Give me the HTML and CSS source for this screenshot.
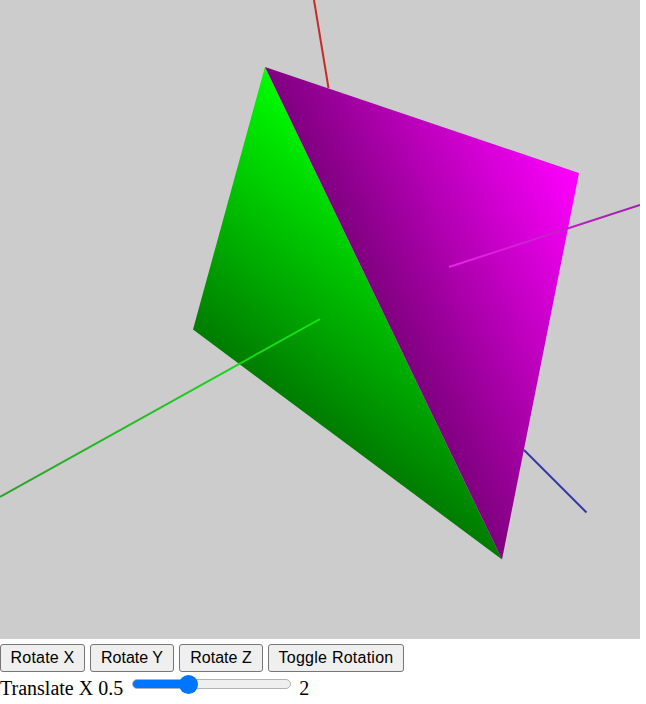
FILE: index.html
```html
<!DOCTYPE html>
<html lang="en">
<head>
<meta charset="utf-8">
<title>Rotating Tetrahedron</title>
<link rel="stylesheet" href="styles.css">
</head>
<body>
<svg class="scene" width="640" height="639" viewBox="0 0 640 639" role="img" aria-label="3D tetrahedron with axes">
  <defs>
    <linearGradient id="faceGreen" gradientUnits="userSpaceOnUse" x1="265" y1="67" x2="113.8" y2="270.1">
      <stop offset="0" stop-color="#00ff00"/>
      <stop offset="1" stop-color="#007c00"/>
    </linearGradient>
    <linearGradient id="faceMagenta" gradientUnits="userSpaceOnUse" x1="365.6" y1="275.8" x2="579" y2="173">
      <stop offset="0" stop-color="#800080"/>
      <stop offset="1" stop-color="#ff00ff"/>
    </linearGradient>
    <linearGradient id="axisGreen" gradientUnits="userSpaceOnUse" x1="320" y1="319" x2="0" y2="497">
      <stop offset="0" stop-color="#11e811"/>
      <stop offset="1" stop-color="#2ca02c"/>
    </linearGradient>
    <linearGradient id="axisMagenta" gradientUnits="userSpaceOnUse" x1="449" y1="267" x2="640" y2="205">
      <stop offset="0" stop-color="#f020f0"/>
      <stop offset="1" stop-color="#a020a8"/>
    </linearGradient>
  </defs>
  <line class="axis axis-red" x1="314" y1="0" x2="328.5" y2="88"/>
  <line class="axis axis-blue" x1="524" y1="450" x2="586.5" y2="512.5"/>
  <polygon points="265,67 193,329.5 502,559.5" fill="url(#faceGreen)"/>
  <polygon points="265,67 579,173 502,559.5" fill="url(#faceMagenta)"/>
  <line class="axis" stroke="url(#axisGreen)" x1="320" y1="319" x2="0" y2="497"/>
  <line class="axis" stroke="url(#axisMagenta)" x1="449" y1="267" x2="640" y2="205"/>
</svg>
<div class="controls">
  <button class="btn btn-x" type="button">Rotate X</button>
  <button class="btn" type="button">Rotate Y</button>
  <button class="btn" type="button">Rotate Z</button>
  <button class="btn btn-wide" type="button">Toggle Rotation</button>
</div>
<div class="slider-row">
  <label for="tx">Translate X 0.5</label>
  <input class="slider" id="tx" type="range" min="0" max="3" step="0.01" value="1">
  <span>2</span>
</div>
</body>
</html>
```
FILE: styles.css
```css
html, body {
  margin: 0;
  padding: 0;
  background: #fff;
}

body {
  font-family: "Liberation Serif", "Times New Roman", serif;
  font-size: 20px;
  color: #000;
}

.scene {
  display: block;
  background: #cccccc;
}

.axis {
  stroke-width: 2;
  fill: none;
}

.axis-red { stroke: #c82a2a; }
.axis-blue { stroke: #3636a8; }

.controls {
  display: flex;
  gap: 5px;
  margin-top: 5px;
}

.btn {
  font-family: "Liberation Sans", Arial, sans-serif;
  font-size: 16px;
  width: 84px;
  height: 28px;
  padding: 1px 0;
  color: #000;
  background: #efefef;
  border: 1px solid #767676;
  border-radius: 3px;
}

.btn-x {
  width: 85px;
  letter-spacing: 0.2px;
}

.btn-wide {
  width: 136px;
  letter-spacing: 0.25px;
}

.slider-row {
  display: flex;
  align-items: flex-start;
  height: 32px;
  line-height: 23px;
  margin-top: 5px;
}

.slider {
  appearance: none;
  -webkit-appearance: none;
  width: 159px;
  height: 20px;
  margin: -3px 8px 0 9px;
  padding: 0;
  background: transparent;
}

.slider::-webkit-slider-runnable-track {
  box-sizing: border-box;
  height: 10px;
  border: 1px solid #b2b2b2;
  border-radius: 5px;
  background: linear-gradient(to right, #0075ff 0, #0075ff 35%, #efefef 35%);
}

.slider::-webkit-slider-thumb {
  -webkit-appearance: none;
  appearance: none;
  width: 19px;
  height: 19px;
  margin-top: -5.5px;
  border: 0;
  border-radius: 50%;
  background: #0075ff;
}
```
